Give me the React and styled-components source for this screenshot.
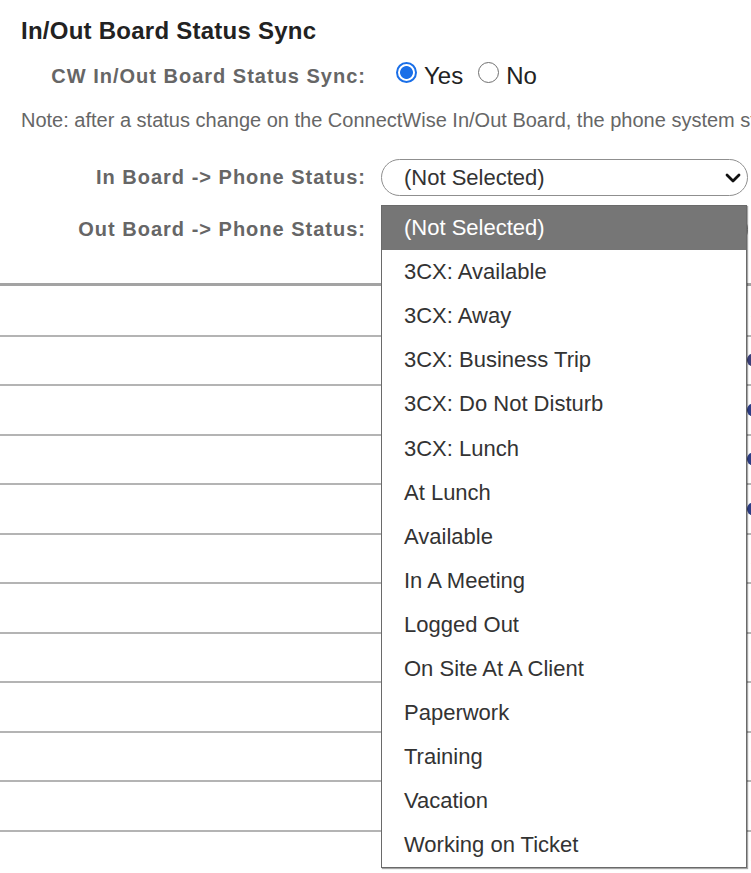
import React from 'react';
import styled, { createGlobalStyle } from 'styled-components';

const GlobalStyle = createGlobalStyle`
  html, body {
    margin: 0;
    padding: 0;
    background: #fff;
  }
  body {
    font-family: "Liberation Sans", Arial, sans-serif;
    overflow: hidden;
    width: 751px;
    height: 873px;
  }
`;

const Page = styled.div`
  width: 751px;
  height: 873px;
  overflow: hidden;
`;

const Card = styled.section`
  padding: 17px 0 35px;
  border-bottom: 3px solid #a3a3a3;
`;

const Title = styled.h2`
  margin: 0 0 0 21px;
  font-size: 24px;
  line-height: 28px;
  font-weight: 700;
  letter-spacing: 0.25px;
  color: #222;
`;

const FieldRow = styled.div`
  display: grid;
  grid-template-columns: 366px auto;
  column-gap: 15px;
  align-items: center;
  height: ${(p) => p.$h}px;
  margin-top: ${(p) => p.$gap}px;
`;

const FieldLabel = styled.label`
  text-align: right;
  font-size: 20px;
  font-weight: 700;
  letter-spacing: 1px;
  color: #666;
  white-space: nowrap;
`;

const RadioGroup = styled.div`
  display: flex;
  align-items: center;
  padding-left: 15px;
`;

const RadioOption = styled.label`
  display: flex;
  align-items: center;
  margin-right: 15px;
  cursor: pointer;
`;

const RadioMark = styled.span`
  width: 21px;
  height: 21px;
  box-sizing: border-box;
  border-radius: 50%;
  margin-top: -7px;
  border: ${(p) => (p.$checked ? '2px solid #1a6fe8' : '1.5px solid #6f6f6f')};
  background: ${(p) =>
    p.$checked ? 'radial-gradient(circle, #1a6fe8 0 6px, #fff 6.8px)' : '#fff'};
`;

const RadioText = styled.span`
  margin-left: 7px;
  font-size: 24px;
  color: #222;
`;

const Note = styled.p`
  margin: 12px 0 0 21px;
  font-size: 20px;
  line-height: 28px;
  color: #666;
  white-space: nowrap;
`;

const SelectWrap = styled.div`
  position: relative;
  width: 367px;
`;

const SelectBox = styled.div`
  height: 37px;
  box-sizing: border-box;
  border: 1px solid #8f8f8f;
  border-radius: 18.5px;
  display: flex;
  align-items: center;
  justify-content: space-between;
  padding: 0 6px 0 22px;
  font-size: 22px;
  color: #333;
  background: #fff;
`;

const Chevron = () => (
  <svg width="16" height="10" viewBox="0 0 16 10">
    <path d="M2 2 L8 8 L14 2" fill="none" stroke="#111" strokeWidth="2.8" strokeLinecap="round" strokeLinejoin="round" />
  </svg>
);

const OptionList = styled.ul`
  position: absolute;
  top: -6px;
  left: 0;
  width: 366px;
  box-sizing: border-box;
  margin: 0;
  padding: 0;
  list-style: none;
  background: #fff;
  border: 1px solid #6a6a6a;
  box-shadow: 1px 1px 1px rgba(0, 0, 0, 0.35);
  z-index: 2;
`;

const OptionItem = styled.li`
  height: 44.1px;
  display: flex;
  align-items: center;
  padding-left: 22px;
  font-size: 22px;
  color: ${(p) => (p.$active ? '#fff' : '#333')};
  background: ${(p) => (p.$active ? '#767676' : 'transparent')};
  white-space: nowrap;
`;

const Table = styled.div`
  margin-top: 1px;
`;

const Row = styled.div`
  height: 49.5px;
  box-sizing: border-box;
  border-bottom: 2px solid #b4b4b4;
  display: flex;
  align-items: center;
  justify-content: flex-end;
`;

const RowMark = styled.span`
  width: 10px;
  height: 12px;
  margin-right: -6px;
  border-radius: 50%;
  background: ${(p) => p.$color};
  box-shadow: 2px 3px 0 -1px ${(p) => p.$accent};
`;

const statuses = [
  '(Not Selected)',
  '3CX: Available',
  '3CX: Away',
  '3CX: Business Trip',
  '3CX: Do Not Disturb',
  '3CX: Lunch',
  'At Lunch',
  'Available',
  'In A Meeting',
  'Logged Out',
  'On Site At A Client',
  'Paperwork',
  'Training',
  'Vacation',
  'Working on Ticket',
];

const rowMarks = [
  ['#fff', '#f6e7a8'],
  ['#3a3f7a', '#e2a23a'],
  ['#2c3d86', '#222'],
  ['#2c3d86', '#222'],
  ['#2c3d86', '#222'],
  ['#fff', '#f6e7a8'],
  ['#fff', '#f6e7a8'],
  ['#fff', '#f6e7a8'],
  ['#fff', '#dfe6f3'],
  ['#fff', '#f6e7a8'],
  ['#fff', '#dfe6f3'],
  ['#fff', '#f6e7a8'],
];

export default function App() {
  return (
    <>
      <GlobalStyle />
      <Page>
        <Card>
          <Title>In/Out Board Status Sync</Title>
          <FieldRow $h={36} $gap={13}>
            <FieldLabel>CW In/Out Board Status Sync:</FieldLabel>
            <RadioGroup>
              <RadioOption>
                <RadioMark $checked />
                <RadioText>Yes</RadioText>
              </RadioOption>
              <RadioOption>
                <RadioMark />
                <RadioText>No</RadioText>
              </RadioOption>
            </RadioGroup>
          </FieldRow>
          <Note>
            Note: after a status change on the ConnectWise In/Out Board, the phone system status will be updated automatically.
          </Note>
          <FieldRow $h={37} $gap={25}>
            <FieldLabel>In Board -&gt; Phone Status:</FieldLabel>
            <SelectWrap>
              <SelectBox>
                <span>(Not Selected)</span>
                <Chevron />
              </SelectBox>
            </SelectWrap>
          </FieldRow>
          <FieldRow $h={37} $gap={15}>
            <FieldLabel>Out Board -&gt; Phone Status:</FieldLabel>
            <SelectWrap>
              <SelectBox>
                <span>(Not Selected)</span>
                <Chevron />
              </SelectBox>
              <OptionList>
                {statuses.map((s, i) => (
                  <OptionItem key={s} $active={i === 0}>
                    {s}
                  </OptionItem>
                ))}
              </OptionList>
            </SelectWrap>
          </FieldRow>
        </Card>
        <Table>
          {rowMarks.map(([c, a], i) => (
            <Row key={i}>
              <RowMark $color={c} $accent={a} />
            </Row>
          ))}
        </Table>
      </Page>
    </>
  );
}
